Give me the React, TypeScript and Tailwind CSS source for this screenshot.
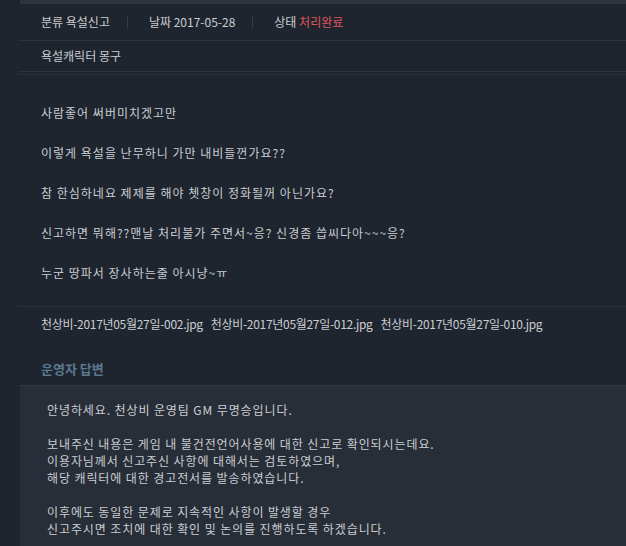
import React from 'react';

const font = { fontFamily: '"Noto Sans CJK KR", "Noto Sans", sans-serif' };

const bodyLines = [
  '사람좋어 써버미치겠고만',
  '이렇게 욕설을 난무하니 가만 내비들껀가요??',
  '참 한심하네요 제제를 해야 쳇창이 정화될꺼 아닌가요?',
  '신고하면 뭐해??맨날 처리불가 주면서~응? 신경좀 씁씨다아~~~응?',
  '누군 땅파서 장사하는줄 아시냥~ㅠ',
];

const files = [
  '천상비-2017년05월27일-002.jpg',
  '천상비-2017년05월27일-012.jpg',
  '천상비-2017년05월27일-010.jpg',
];

const App: React.FC = () => {
  return (
    <div className="w-[626px] h-[546px] overflow-hidden bg-[#1f252e] text-[#c9cdd2] text-[12px]" style={font}>
      <div className="ml-[18px]">
        {/* top strip */}
        <div className="ml-[2px] h-[4px] bg-[#2c3440]" />

        {/* meta row */}
        <div className="h-[37px] flex items-center pl-[23px] border-b border-[#2c333d]">
          <span>분류 욕설신고</span>
          <span className="ml-[17px] mr-[21px] w-px h-[12px] bg-[#363d47]" />
          <span>날짜 2017-05-28</span>
          <span className="ml-[17px] mr-[21px] w-px h-[12px] bg-[#363d47]" />
          <span>
            상태 <span className="text-[#e0555a]">처리완료</span>
          </span>
        </div>

        {/* subject */}
        <div className="h-[31px] flex items-center pl-[23px] border-b border-[#2c333d]">욕설캐릭터 몽구</div>
        <div className="h-[3px] border-b border-[#2a3039]" />

        {/* body */}
        <div className="pl-[23px] pt-[28px] pb-[23px] flex flex-col gap-[20px] tracking-[1px] border-b border-[#29303a]">
          {bodyLines.map((l) => (
            <p key={l} className="leading-[20px]">{l}</p>
          ))}
        </div>

        {/* attachments */}
        <div className="pl-[23px] pt-[9px] flex gap-[8px] leading-[16px] tracking-[-0.3px]">
          {files.map((f) => (
            <span key={f}>{f}</span>
          ))}
        </div>

        {/* answer */}
        <div className="pl-[23px] pt-[28px] pb-[7px] text-[13px] font-bold leading-[18px] text-[#5b7891]">운영자 답변</div>
        <div className="ml-[2px] bg-[#282e38] border-t border-[#313843] pl-[27px] pt-[15px] pb-[20px] tracking-[0.9px] leading-[17px]">
          <p>안녕하세요. 천상비 운영팀 GM 무명승입니다.</p>
          <p className="mt-[17px]">보내주신 내용은 게임 내 불건전언어사용에 대한 신고로 확인되시는데요.</p>
          <p>이용자님께서 신고주신 사항에 대해서는 검토하였으며,</p>
          <p>해당 캐릭터에 대한 경고전서를 발송하였습니다.</p>
          <p className="mt-[17px]">이후에도 동일한 문제로 지속적인 사항이 발생할 경우</p>
          <p>신고주시면 조치에 대한 확인 및 논의를 진행하도록 하겠습니다.</p>
        </div>
      </div>
    </div>
  );
};

export default App;
